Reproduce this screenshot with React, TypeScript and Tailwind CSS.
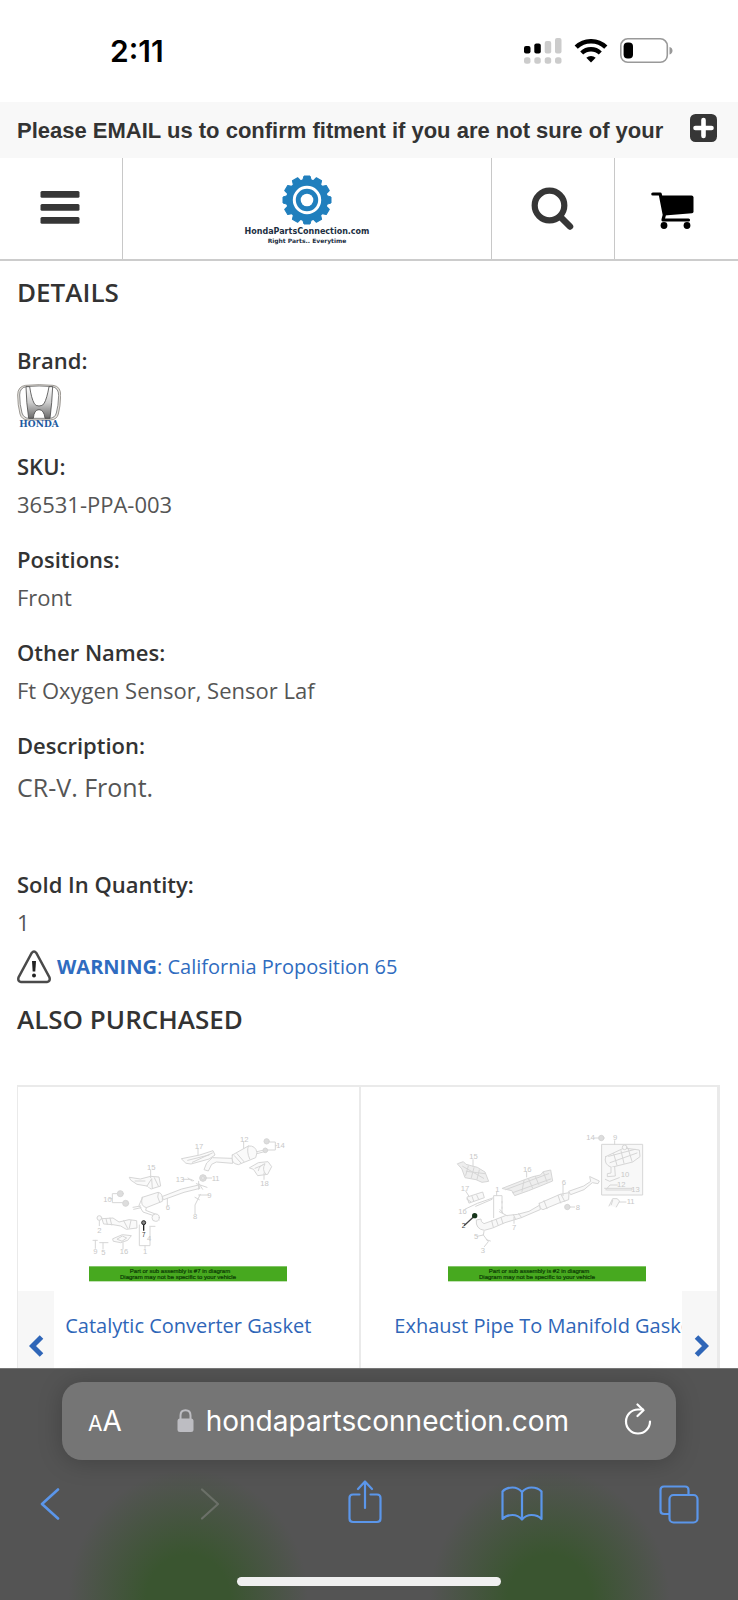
import type { ReactNode } from "react";

const openSans = "font-['Open_Sans','Noto_Sans',sans-serif]";
const inter = "font-[Inter,Roboto,sans-serif]";

function StatusBar() {
  return (
    <div className="flex h-[102px] items-center justify-between pr-[65px] pl-[110px]">
      <span className={`${inter} text-[30px] font-semibold leading-none text-black`}>2:11</span>
      <div className="flex items-center gap-3">
        <svg width="38" height="26" viewBox="0 0 38 26" aria-label="Signal">
          <rect x="0" y="8" width="6.5" height="7.5" rx="2" fill="#000" />
          <rect x="10.300" y="5.500" width="6.500" height="10" rx="2" fill="#000" />
          <rect x="20.700" y="3" width="6.500" height="12.500" rx="2" fill="#ccc" />
          <rect x="31" y="0" width="6.500" height="15.500" rx="2" fill="#ccc" />
          {[0, 10.3, 20.7, 31].map((x) => (
            <rect key={x} x={x} y="19.300" width="6.500" height="6.500" rx="2.500" fill="#ccc" />
          ))}
        </svg>
        <svg width="34" height="24" viewBox="0 0 34 24" aria-label="Wi-Fi">
          <path d="M2.200 8.200A21.500 21.500 0 0 1 31.800 8.200" fill="none" stroke="#000" strokeWidth="4.600" />
          <path d="M7.700 14A13.400 13.400 0 0 1 26.300 14" fill="none" stroke="#000" strokeWidth="4.300" />
          <path d="M12.300 18.700A7 7 0 0 1 21.700 18.700L17 23.600Z" fill="#000" />
        </svg>
        <svg width="53" height="26" viewBox="0 0 53 26" aria-label="Battery">
          <rect x="0.800" y="0.800" width="46.500" height="23.500" rx="7" fill="none" stroke="#999" strokeWidth="1.600" />
          <rect x="3.600" y="4.600" width="9.400" height="16" rx="4" fill="#000" />
          <path d="M49.500 9V16.500Q52.500 15.500 52.500 12.700T49.500 9Z" fill="#999" />
        </svg>
      </div>
    </div>
  );
}

function Announcement() {
  return (
    <div className="flex h-14 items-center justify-between bg-[#f8f8f8] pr-[21px] pl-[17px]">
      <p className="whitespace-nowrap font-['Liberation_Sans',Arial,sans-serif] text-[22px] font-bold text-[#333]">
        Please EMAIL us to confirm fitment if you are not sure of your
      </p>
      <button type="button" aria-label="Expand message" className="mb-1 shrink-0">
        <svg width="27" height="28" viewBox="0 0 27 28">
          <rect width="27" height="28" rx="5.500" fill="#363636" />
          <path d="M13.500 6V22M5.500 14H21.500" stroke="#fff" strokeWidth="4.600" strokeLinecap="round" />
        </svg>
      </button>
    </div>
  );
}

const gearTeeth = [0, 30, 60, 90, 120, 150, 180, 210, 240, 270, 300, 330];

function NavBar() {
  return (
    <nav className="grid h-[103px] grid-cols-[1fr_3fr_1fr_1fr] divide-x divide-[#c8c8c8] border-b-2 border-[#ccc]">
      <button type="button" aria-label="Menu" className="flex items-center justify-center pr-0.5 pb-0.5">
        <svg width="40" height="34" viewBox="0 0 40 34" fill="#363636">
          <rect x="0.500" y="0" width="39" height="6.700" rx="1.500" />
          <rect x="0.500" y="13" width="39" height="6.700" rx="1.500" />
          <rect x="0.500" y="26" width="39" height="6.700" rx="1.500" />
        </svg>
      </button>
      <a href="#home" className="flex flex-col items-center justify-center font-['DejaVu_Sans',sans-serif] font-bold text-[#1c2f42]">
        <svg width="50" height="50" viewBox="-25 -25 50 50" className="mt-0.5">
          <circle r="21" fill="#207fbd" />
          {gearTeeth.map((angle) => (
            <path key={angle} d="M-4.500 -19L-3 -24H3L4.500 -19Z" fill="#207fbd" stroke="#207fbd" strokeLinejoin="round" transform={`rotate(${angle})`} />
          ))}
          <circle r="12.700" fill="none" stroke="#fff" strokeWidth="3" />
          <circle r="6.300" fill="#fff" />
        </svg>
        <span className="mt-0.5 text-[8px] leading-[10px]">HondaPartsConnection.com</span>
        <span className="text-[6px] leading-[8px]">Right Parts.. Everytime</span>
      </a>
      <button type="button" aria-label="Search" className="flex items-center justify-center pr-0.5">
        <svg width="43" height="44" viewBox="0 0 43 44" fill="none" stroke="#363636">
          <circle cx="18.500" cy="18.500" r="14.800" strokeWidth="6.200" />
          <path d="M29.500 30L39 39.500" strokeWidth="6.500" strokeLinecap="round" />
        </svg>
      </button>
      <button type="button" aria-label="Cart" className="flex items-center justify-center pt-1 pr-2">
        <svg width="43" height="37" viewBox="0 0 43 37">
          <path d="M1.800 2H9.200L13.300 23L12 28H37.500" fill="none" stroke="#000" strokeWidth="3.200" strokeLinecap="round" strokeLinejoin="round" />
          <path d="M9 3.500H40.500Q42.500 3.500 42.500 5.500V19.500Q42.500 21 41 21.200L13.500 23.500Z" fill="#000" />
          <circle cx="13" cy="33.500" r="3.400" />
          <circle cx="36" cy="33.500" r="3.400" />
        </svg>
      </button>
    </nav>
  );
}

function HondaLogo() {
  return (
    <svg width="44" height="46" viewBox="52 343 132 138" aria-label="Honda">
      <defs>
        <linearGradient id="chrome" x1="0" y1="0" x2="0" y2="1">
          <stop offset="0" stopColor="#fff" />
          <stop offset="0.500" stopColor="#ccc" />
          <stop offset="1" stopColor="#6a6a6a" />
        </linearGradient>
      </defs>
      <path d="M78 347Q118 343 160 347Q184 350 183 378Q182 412 176 433Q172 450 152 451H84Q66 450 61 433Q54 406 54 376Q54 350 78 347Z" fill="#e6e4e0" stroke="#8a8680" strokeWidth="2.500" />
      <path d="M80 351Q118 347 157 351Q177 354 177 378Q176 410 170 430Q166 445 150 446H87Q72 445 67 430Q60 405 60 376Q60 354 80 351Z" fill="#fff" stroke="#555" strokeWidth="2" />
      <path d="M79 351H90Q95 386 104 402Q108 409 118 409T133 402Q142 386 148 351H159Q157 400 151 446H136Q133 420 118 420T101 446H87Q80 400 79 351Z" fill="url(#chrome)" stroke="#4c4c4c" strokeWidth="2.500" />
      <text x="118" y="473" textAnchor="middle" fontFamily="DejaVu Serif, serif" fontWeight="700" fontSize="27" fill="#1e5b9f">HONDA</text>
    </svg>
  );
}

function Field({ label, children }: { label: string; children: ReactNode }) {
  return (
    <div>
      <dt className="text-[22px] leading-[38px] font-semibold text-[#333]">{label}</dt>
      <dd className="text-[22px] leading-[38px] text-[#555]">{children}</dd>
    </div>
  );
}

function Banner({ x, part }: { x: number; part: string }) {
  return (
    <g fontFamily="Liberation Sans, sans-serif" fontSize="18" fill="#0c3a04" stroke="#0c3a04" strokeWidth="0.600">
      <rect x={x} y="560" width="594" height="45" fill="#47a91f" stroke="none" />
      <text x={x + 273} y="580" textAnchor="middle">Part or sub assembly is {part} in diagram</text>
      <text x={x + 267} y="599" textAnchor="middle">Diagram may not be specific to your vehicle</text>
    </g>
  );
}

function ConverterDiagram() {
  return (
    <svg width="198" height="149" viewBox="270 160 594 447" aria-label="Exhaust system diagram">
      <g fill="#fafafa" stroke="#d6d6d6" strokeWidth="3" strokeLinejoin="round" strokeLinecap="round">
        <path d="M548 237L602 226L642 213L648 226L630 238L576 253L562 251Z" />
        <path d="M566 242L630 226M580 248L640 220" />
        <path d="M700 226L748 199Q770 197 774 219L770 234L718 255Q694 252 700 226Z" />
        <path d="M748 199Q742 215 752 238M706 228L726 250M714 222L735 246" />
        <path d="M698 236L640 234L623 250L615 270L628 274L638 254L652 247L700 251Z" />
        <path d="M774 216L796 211M774 222L800 215" />
        <circle cx="803" cy="185" r="8" fill="#ddd" /><circle cx="799" cy="212" r="7" fill="#ddd" />
        <path d="M812 187H829V211H806M829 198H834" fill="none" />
        <path d="M752 264L778 249L807 246L818 261L806 284L776 288L764 270Z" />
        <path d="M768 266L790 257M778 273Q780 258 798 252Q788 270 800 283" />
        <path d="M392 293L424 298L455 290L480 292L485 319L456 328L444 319L414 314L396 302Z" />
        <path d="M408 304H438M444 319L458 297L460 327M466 294L478 319" />
        <path d="M430 353L477 338Q493 340 490 365L442 384Q422 379 430 353Z" />
        <path d="M478 338Q472 351 482 368M430 354L420 377L432 397L467 409L480 421M442 384L440 392L474 405" fill="none" />
        <circle cx="470" cy="414" r="11" />
        <path d="M402 383L425 379M404 389L426 384" />
        <path d="M491 350L548 328L599 316L603 326L555 338L494 360Z" />
        <path d="M592 312L624 323M599 305V329M600 312L611 329" />
        <circle cx="612" cy="295" r="10" fill="#ddd" /><circle cx="612" cy="295" r="4" />
        <path d="M553 299H575L584 303M622 295H638M567 295L579 304" />
        <circle cx="364" cy="342" r="9" fill="#ddd" /><circle cx="380" cy="371" r="9" fill="#ddd" />
        <path d="M354 342H340V369H370M331 357H340" fill="none" />
        <path d="M310 417L342 415L360 427L390 420L413 423L414 445L382 449L365 439L342 435L315 433Z" />
        <path d="M321 417L325 434M333 415L338 436M374 423L386 446M396 422L391 445" />
        <circle cx="301" cy="415" r="7" /><path d="M301 423V438" />
        <path d="M342 477L370 465L397 468L386 482L365 489L344 485Z" />
        <path d="M355 478L370 469L383 475L370 484Z" />
        <path d="M282 482H295M289 482V506M302 489H327M312 489V508M372 489V508M604 344L588 376V402M599 346H628M588 353L601 360M505 356V376M597 206V225M734 186V206M795 280V299M455 272V294" fill="none" />
        <path d="M421 436V498H453V443M438 498V506M452 440H468" fill="none" />
      </g>
      <g fill="#c8c8c8" fontFamily="Liberation Sans, sans-serif" fontSize="23">
        <text x="587" y="207">17</text><text x="723" y="186">12</text><text x="832" y="205">14</text>
        <text x="784" y="318">18</text><text x="444" y="271">15</text><text x="638" y="303">11</text>
        <text x="530" y="307">13</text><text x="313" y="366">10</text><text x="500" y="391">6</text>
        <text x="625" y="355">9</text><text x="582" y="417">8</text><text x="295" y="459">2</text>
        <text x="283" y="523">9</text><text x="307" y="525">5</text><text x="362" y="524">16</text>
        <text x="432" y="523">1</text><text x="444" y="485">4</text>
      </g>
      <circle cx="434" cy="429" r="6" fill="#888" stroke="#222" strokeWidth="3" />
      <path d="M434 435V453" stroke="#222" strokeWidth="4" />
      <text x="429" y="472" fill="#333" fontFamily="Liberation Sans, sans-serif" fontSize="19">7</text>
      <Banner x={270} part="#7" />
    </svg>
  );
}

function ManifoldDiagram() {
  return (
    <svg width="198" height="149" viewBox="238 160 594 447" aria-label="Exhaust pipe diagram">
      <g fill="#f8f8f8" stroke="#d6d6d6" strokeWidth="3" strokeLinejoin="round" strokeLinecap="round">
        <rect x="700" y="194" width="122" height="152" strokeWidth="3" />
        <path d="M711 231L766 205L812 211L814 231L792 247L728 263Q704 254 711 231Z" />
        <path d="M720 230L799 209M724 249L805 220M735 222L745 257M757 213L766 251M779 209L790 245" />
        <circle cx="768" cy="203" r="7" />
        <path d="M727 263V280L716 282V291L740 289L738 262M710 299L723 305L752 294M711 331L724 316H746M708 326H790V331H714" />
        <circle cx="698" cy="175" r="8" fill="#ddd" /><path d="M677 175H690M738 183V194" />
        <path d="M267 252L284 246L292 254L326 263L349 277L360 305L340 308L322 300L289 294L280 269Z" fill="#eee" />
        <path d="M282 260L345 296M299 259L291 287M316 264L308 294M332 271L325 299M293 275L349 282" />
        <path d="M401 326L457 304L493 291L515 286L524 276L546 271L552 304L520 317L480 333L438 348L430 334Z" fill="#eee" />
        <path d="M411 330L540 282M432 339L546 298M466 302L460 335M500 290L510 314M524 277L535 307M480 298L492 326" />
        <path d="M296 352L342 337L347 354L302 370Z" />
        <path d="M310 350L315 364M324 346L330 359M294 358L306 366M290 388L326 371L372 355M321 380L370 359" />
        <path d="M664 291L692 304L688 312L671 309L646 330L606 345L600 335L645 319L665 306Z" />
        <path d="M512 371L574 344L601 339L600 360L571 370L523 390Q510 387 512 371Z" />
        <path d="M526 363L535 387M568 347L576 370M577 344L588 365" />
        <path d="M512 377L481 395L447 404L410 408L374 422L346 432Q335 426 337 418L323 421Q320 448 347 452L372 445L409 429L458 414L514 390Z" />
        <path d="M369 423L374 443M382 419L389 438M397 413L403 432M450 402L459 414M434 405L441 419" />
        <path d="M375 414V348H400V399M384 336V348M392 396L415 408M394 390L403 400M400 365V370M400 382V386" fill="none" />
        <circle cx="596" cy="382" r="8" fill="#ddd" /><path d="M604 382H618M583 317V348M474 276V292M313 240V260M291 334L301 350M436 413V431" />
        <path d="M721 379L732 357H745L753 364L743 382M732 362L728 375M752 367H772" />
        <path d="M346 455L344 466L325 470M344 466L359 486L347 501M353 480L365 484" fill="none" />
      </g>
      <g fill="#c8c8c8" fontFamily="Liberation Sans, sans-serif" fontSize="23">
        <text x="653" y="182">14</text><text x="733" y="181">9</text><text x="302" y="238">15</text>
        <text x="463" y="276">16</text><text x="276" y="333">17</text><text x="269" y="403">16</text>
        <text x="380" y="338">1</text><text x="579" y="315">6</text><text x="621" y="392">8</text>
        <text x="430" y="452">7</text><text x="774" y="373">11</text><text x="756" y="293">10</text>
        <text x="745" y="322">12</text><text x="788" y="337">13</text><text x="316" y="479">5</text><text x="336" y="519">3</text>
      </g>
      <path d="M315 411L286 438" stroke="#444" strokeWidth="4" />
      <circle cx="318" cy="408" r="8" fill="#17351a" />
      <text x="279" y="446" fill="#444" fontFamily="Liberation Sans, sans-serif" fontSize="20">2</text>
      <Banner x={238} part="#2" />
    </svg>
  );
}

function Carousel() {
  return (
    <section className="relative flex h-[283px] overflow-hidden border-t-2 border-r-3 border-l border-[#eaeaea]">
      <article className="flex min-w-0 flex-1 flex-col items-center border-r-2 border-[#eaeaea] pt-[46px]">
        <ConverterDiagram />
        <a href="#converter-gasket" className="mt-[25px] whitespace-nowrap text-[20px] leading-[38px] text-[#2f66b8]">Catalytic Converter Gasket</a>
      </article>
      <article className="flex min-w-0 flex-1 flex-col items-center pt-[46px] pl-4">
        <ManifoldDiagram />
        <a href="#manifold-gasket" className="mt-[25px] whitespace-nowrap text-[20px] leading-[38px] text-[#2f66b8]">Exhaust Pipe To Manifold Gasket</a>
      </article>
      <button type="button" aria-label="Previous" className="absolute bottom-0 left-0 flex h-[77px] w-9 items-center justify-center bg-[#f7f7f7] pt-8">
        <svg width="15" height="22" viewBox="0 0 15 22" fill="none" stroke="#2f66b8" strokeWidth="5">
          <path d="M12.500 2L3.500 11L12.500 20" />
        </svg>
      </button>
      <button type="button" aria-label="Next" className="absolute -right-[3px] bottom-0 flex h-[77px] w-[38px] items-center justify-center bg-[#f7f7f7] pt-8">
        <svg width="15" height="22" viewBox="0 0 15 22" fill="none" stroke="#2f66b8" strokeWidth="5">
          <path d="M2.500 2L11.500 11L2.500 20" />
        </svg>
      </button>
    </section>
  );
}

function BrowserBar() {
  return (
    <footer className="flex flex-1 flex-col border-t border-[#777] bg-[#545454] bg-[radial-gradient(ellipse_120px_130px_at_25.500%_100%,#3a5530_35%,transparent),radial-gradient(ellipse_120px_130px_at_74.500%_100%,#3a5530_35%,transparent)] pt-[13px]">
      <div className="mx-[62px] flex h-[78px] items-center justify-between rounded-[20px] bg-[#757575] pr-[24px] pl-[26px] text-white shadow-[0_2px_24px_rgba(0,0,0,0.22)]">
        <button type="button" aria-label="Page settings" className={`${inter} flex items-baseline`}>
          <span className="text-[21px]">A</span>
          <span className="text-[28px]">A</span>
        </button>
        <div className="flex items-center gap-3">
          <svg width="17" height="24" viewBox="0 0 17 24">
            <rect x="0.500" y="9.500" width="16" height="13.500" rx="2.500" fill="#bdbdc2" />
            <path d="M3.500 11V6.500Q3.500 1.200 8.500 1.200T13.500 6.500V11" fill="none" stroke="#bdbdc2" strokeWidth="2" />
          </svg>
          <span className={`${inter} text-[28px]`}>hondapartsconnection.com</span>
        </div>
        <button type="button" aria-label="Reload">
          <svg width="28" height="32" viewBox="0 0 28 32" fill="none" stroke="#fff" strokeWidth="2.200" strokeLinecap="round" strokeLinejoin="round" className="mb-1">
            <path d="M26 18.500A12 12 0 1 1 14 6.500H19" />
            <path d="M13.500 1.500L19.500 7.200L13.500 13" />
          </svg>
        </button>
      </div>
      <div className="mt-5 flex h-12 items-center justify-between pr-[37px] pl-7 text-[#5b96ea]">
        <button type="button" aria-label="Back" className="flex w-11 justify-center">
          <svg width="20" height="32" viewBox="0 0 20 32" fill="none" stroke="currentColor" strokeWidth="2.600" strokeLinecap="round" strokeLinejoin="round">
            <path d="M18 1.500L2 16L18 30.500" />
          </svg>
        </button>
        <button type="button" aria-label="Forward" className="flex w-11 justify-end text-[#6b7068]">
          <svg width="30" height="32" viewBox="0 0 30 32" fill="none" stroke="currentColor" strokeWidth="2.200" strokeLinecap="round" strokeLinejoin="round">
            <path d="M3 1.500L19 16L3 30.500" />
          </svg>
        </button>
        <button type="button" aria-label="Share" className="flex w-11 justify-center">
          <svg width="34" height="44" viewBox="0 0 34 44" fill="none" stroke="currentColor" strokeWidth="2.200" strokeLinecap="round" strokeLinejoin="round" className="mb-1">
            <path d="M11.500 14.500H5Q1.500 14.500 1.500 18V38.500Q1.500 42 5 42H29Q32.500 42 32.500 38.500V18Q32.500 14.500 29 14.500H22.500" />
            <path d="M17 28V1.500M10 9L17 1.500L24 9" />
          </svg>
        </button>
        <button type="button" aria-label="Bookmarks" className="flex w-11 justify-center">
          <svg width="42" height="36" viewBox="0 0 42 36" fill="none" stroke="currentColor" strokeWidth="2.200" strokeLinecap="round" strokeLinejoin="round">
            <path d="M21 6Q17 1.500 11.500 1.500Q5 1.500 1.500 5.500V33Q5 29 11.500 29Q17 29 21 33.500Q25 29 30.500 29Q37 29 40.500 33V5.500Q37 1.500 30.500 1.500Q25 1.500 21 6V33" />
          </svg>
        </button>
        <button type="button" aria-label="Tabs" className="flex w-11 justify-center">
          <svg width="40" height="39" viewBox="0 0 40 39" fill="none" stroke="currentColor" strokeWidth="2.200" strokeLinecap="round" strokeLinejoin="round">
            <rect x="10.500" y="10" width="28" height="27.500" rx="4" />
            <path d="M10 29H5Q1.500 29 1.500 25.500V5Q1.500 1.500 5 1.500H26Q29.500 1.500 29.500 5V9.500" />
          </svg>
        </button>
      </div>
      <div className="mx-auto mt-auto mb-[14px] h-[9px] w-[264px] rounded-full bg-[#f0f0f0]" />
    </footer>
  );
}

export default function App() {
  return (
    <div className="flex min-h-screen flex-col bg-white">
      <StatusBar />
      <Announcement />
      <NavBar />
      <main className={`${openSans} pt-3 pr-[18px] pl-[17px]`}>
        <h2 className="text-[26px] leading-[38px] font-semibold text-[#333]">DETAILS</h2>
        <dl className="mt-[30px] flex flex-col gap-[17px]">
          <div>
            <dt className="text-[22px] leading-[38px] font-semibold text-[#333]">Brand:</dt>
            <dd className="pt-[5px]"><HondaLogo /></dd>
          </div>
          <Field label="SKU:">36531-PPA-003</Field>
          <Field label="Positions:">Front</Field>
          <Field label="Other Names:">Ft Oxygen Sensor, Sensor Laf</Field>
          <div>
            <dt className="text-[22px] leading-[38px] font-semibold text-[#333]">Description:</dt>
            <dd className="pb-[38px] text-[25px] leading-[46px] text-[#555]">CR-V. Front.</dd>
          </div>
          <Field label="Sold In Quantity:">1</Field>
        </dl>
        <div className="mt-[7px] flex items-center gap-[6px]">
          <svg width="34" height="34" viewBox="0 0 34 34" aria-hidden="true">
            <path d="M14.700 3Q17 0 19.300 3L32.500 27.500Q33.500 31.500 30 32H4Q0.500 31.500 1.500 27.500Z" fill="#fff" stroke="#4a4a4a" strokeWidth="2.500" />
            <path d="M15 11H19L18.300 21.500H15.700Z" fill="#222" />
            <circle cx="17" cy="25.500" r="2" fill="#222" />
          </svg>
          <a href="#proposition-65" className="text-[20px] leading-[38px] text-[#2f6cc0]"><strong>WARNING</strong>: California Proposition 65</a>
        </div>
        <h2 className="mt-3.5 mb-[47px] text-[26px] leading-[38px] font-semibold text-[#333]">ALSO PURCHASED</h2>
        <Carousel />
      </main>
      <BrowserBar />
    </div>
  );
}
